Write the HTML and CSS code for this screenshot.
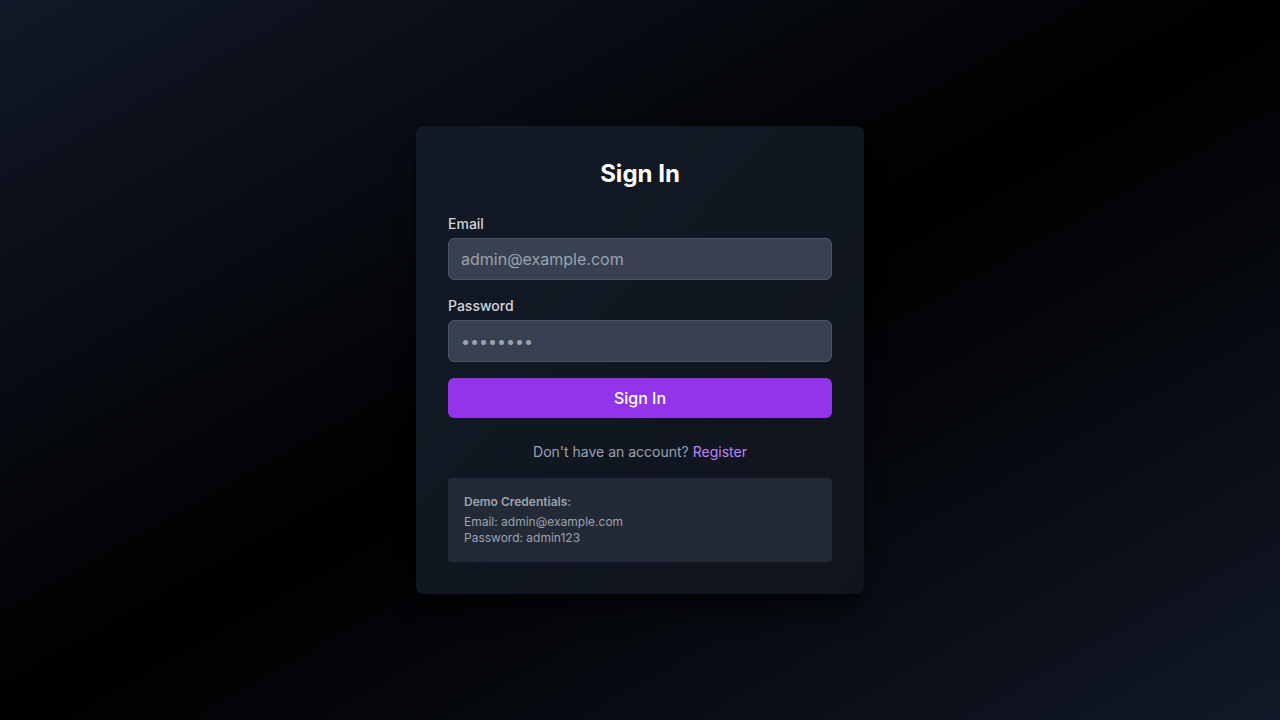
FILE: index.html
```html
<!DOCTYPE html>
<html lang="en">
<head>
<meta charset="utf-8">
<title>Sign In</title>
<link rel="stylesheet" href="styles.css">
</head>
<body>
<main class="page">
  <div class="card">
    <h1 class="title">Sign In</h1>
    <form class="form">
      <div class="field">
        <label class="label" for="email">Email</label>
        <input class="input" id="email" type="email" placeholder="admin@example.com">
      </div>
      <div class="field">
        <label class="label" for="password">Password</label>
        <input class="input" id="password" type="password" placeholder="••••••••">
      </div>
      <button class="btn" type="button">Sign In</button>
    </form>
    <p class="switch">Don't have an account? <a class="link" href="#">Register</a></p>
    <div class="demo">
      <p class="demo-title">Demo Credentials:</p>
      <p class="demo-line">Email: admin@example.com</p>
      <p class="demo-line">Password: admin123</p>
    </div>
  </div>
</main>
</body>
</html>
```

FILE: styles.css
```css
* { box-sizing: border-box; }
html, body { margin: 0; padding: 0; height: 100%; }
body {
  font-family: Inter, "Noto Sans", sans-serif;
  background: linear-gradient(to bottom right, #111827 0%, #000000 50%, #111827 100%);
  color: #fff;
}
.page {
  min-height: 100vh;
  display: flex;
  align-items: center;
  justify-content: center;
}
.card {
  width: 448px;
  padding: 32px;
  border-radius: 8px;
  background: linear-gradient(to bottom right, #131a25, #0f141d);
  box-shadow: 0 20px 25px -5px rgba(0,0,0,0.5), 0 8px 10px -6px rgba(0,0,0,0.5);
}
.title {
  margin: 0 0 24px;
  font-size: 24px;
  line-height: 32px;
  font-weight: 700;
  text-align: center;
  color: #fff;
}
.form { display: flex; flex-direction: column; gap: 16px; }
.field { display: flex; flex-direction: column; }
.label {
  font-size: 14px;
  line-height: 20px;
  font-weight: 500;
  color: #d1d5db;
  margin-bottom: 4px;
}
.input {
  height: 42px;
  padding: 8px 12px;
  font-family: inherit;
  font-size: 16px;
  line-height: 24px;
  color: #fff;
  background: #374151;
  border: 1px solid #4b5563;
  border-radius: 6px;
  outline: none;
}
.input::placeholder { color: #9ca3af; }
.btn {
  height: 40px;
  font-family: inherit;
  font-size: 16px;
  font-weight: 500;
  color: #fff;
  background: #9333ea;
  border: none;
  border-radius: 6px;
  cursor: pointer;
}
.switch {
  margin: 24px 0 0;
  text-align: center;
  font-size: 14px;
  line-height: 20px;
  color: #9ca3af;
}
.link { color: #c084fc; text-decoration: none; }
.demo {
  margin-top: 16px;
  padding: 16px;
  border-radius: 4px;
  background: #232a36;
}
.demo-title {
  margin: 0 0 4px;
  font-size: 12px;
  line-height: 16px;
  font-weight: 600;
  color: #9ca3af;
}
.demo-line {
  margin: 0;
  font-size: 12px;
  line-height: 16px;
  color: #9ca3af;
}
```
